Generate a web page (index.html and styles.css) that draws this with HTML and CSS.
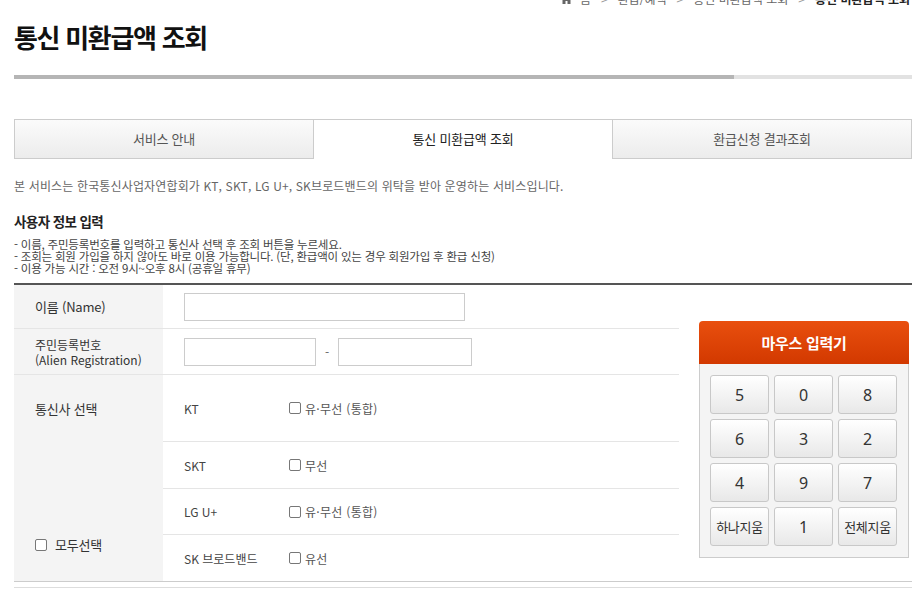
FILE: index.html
```html
<!DOCTYPE html>
<html lang="ko">
<head>
<meta charset="utf-8">
<title>통신 미환급액 조회</title>
<link rel="stylesheet" href="styles.css">
</head>
<body>
<div class="page">
  <div class="crumb">
    <svg class="home" width="11" height="10" viewBox="0 0 11 10"><path d="M5.5 0 L11 5 H9.5 V10 H6.5 V7 H4.5 V10 H1.5 V5 H0 Z" fill="#666"/></svg>
    <span>홈</span><span class="gt">&gt;</span><span>환급/혜택</span><span class="gt">&gt;</span><span>통신 미환급액 조회</span><span class="gt">&gt;</span><strong>통신 미환급액 조회</strong>
  </div>
  <h1 class="title">통신 미환급액 조회</h1>
  <div class="bar"><div class="bar-on"></div><div class="bar-off"></div></div>

  <div class="tabs">
    <div class="tab">서비스 안내</div>
    <div class="tab active">통신 미환급액 조회</div>
    <div class="tab">환급신청 결과조회</div>
  </div>

  <p class="desc">본 서비스는 한국통신사업자연합회가 KT, SKT, LG U+, SK브로드밴드의 위탁을 받아 운영하는 서비스입니다.</p>

  <h2 class="sub-title">사용자 정보 입력</h2>
  <ul class="notes">
    <li>- 이름, 주민등록번호를 입력하고 통신사 선택 후 조회 버튼을 누르세요.</li>
    <li>- 조회는 회원 가입을 하지 않아도 바로 이용 가능합니다. (단, 환급액이 있는 경우 회원가입 후 환급 신청)</li>
    <li>- 이용 가능 시간 : 오전 9시~오후 8시 (공휴일 휴무)</li>
  </ul>

  <div class="form-area">
    <div class="form-table">
      <div class="row row-name">
        <div class="th">이름 (Name)</div>
        <div class="td"><input type="text" class="inp inp-name"></div>
      </div>
      <div class="row row-reg">
        <div class="th th-two">주민등록번호<br>(Alien Registration)</div>
        <div class="td"><input type="text" class="inp inp-reg1"><span class="dash">-</span><input type="text" class="inp inp-reg2"></div>
      </div>
      <div class="row row-carrier">
        <div class="th th-carrier">
          <span>통신사 선택</span>
          <label class="all"><input type="checkbox" class="chk"><span>모두선택</span></label>
        </div>
        <div class="subrows">
          <div class="sub sub1"><span class="cname">KT</span><label class="opt"><input type="checkbox" class="chk"><span>유·무선 (통합)</span></label></div>
          <div class="sub sub2"><span class="cname">SKT</span><label class="opt"><input type="checkbox" class="chk"><span>무선</span></label></div>
          <div class="sub sub3"><span class="cname">LG U+</span><label class="opt"><input type="checkbox" class="chk"><span>유·무선 (통합)</span></label></div>
          <div class="sub sub4"><span class="cname">SK 브로드밴드</span><label class="opt"><input type="checkbox" class="chk"><span>유선</span></label></div>
        </div>
      </div>
    </div>

    <div class="keypad">
      <div class="kp-head">마우스 입력기</div>
      <div class="kp-body">
        <button class="key">5</button><button class="key">0</button><button class="key">8</button>
        <button class="key">6</button><button class="key">3</button><button class="key">2</button>
        <button class="key">4</button><button class="key">9</button><button class="key">7</button>
        <button class="key key-txt">하나지움</button><button class="key">1</button><button class="key key-txt">전체지움</button>
      </div>
    </div>
  </div>
  <div class="after"></div>
</div>
</body>
</html>
```

FILE: styles.css
```css
html, body {
  margin: 0;
  padding: 0;
  background: #fff;
  overflow: hidden;
}
body {
  font-family: "Noto Sans CJK KR", "Noto Sans", sans-serif;
  color: #333;
}
.page {
  width: 898px;
  margin-left: 14px;
}
.crumb {
  height: 12px;
  margin-top: -7px;
  font-size: 12px;
  line-height: 12px;
  color: #666;
  display: flex;
  justify-content: flex-end;
  align-items: center;
  gap: 10px;
  padding-right: 2px;
}
.crumb .home { margin-right: -2px; }
.crumb strong { color: #222; font-weight: bold; }
.crumb .gt { color: #999; }
.title {
  margin: 14px 0 0;
  font-size: 26px;
  line-height: 36px;
  font-weight: bold;
  color: #111;
  letter-spacing: -1.3px;
}
.bar {
  display: flex;
  height: 4px;
  margin-top: 20px;
}
.bar-on { width: 720px; background: #b5b5b5; }
.bar-off { flex: 1; background: #e2e2e2; }

.tabs {
  display: flex;
  margin-top: 40px;
  height: 40px;
}
.tab {
  flex: 1;
  box-sizing: border-box;
  border: 1px solid #ccc;
  border-right: none;
  background: linear-gradient(#fbfbfb, #ececec);
  font-size: 13px;
  line-height: 38px;
  text-align: center;
  color: #555;
  letter-spacing: -0.2px;
}
.tab:last-child { border-right: 1px solid #ccc; }
.tab.active {
  background: #fff;
  border-bottom: none;
  color: #222;
}
.desc {
  margin: 18px 0 0;
  font-size: 12px;
  line-height: 18px;
  color: #666;
  letter-spacing: 0.15px;
}
.sub-title {
  margin: 16px 0 0;
  font-size: 13.5px;
  line-height: 20px;
  font-weight: bold;
  color: #222;
  letter-spacing: -0.6px;
}
.notes {
  list-style: none;
  margin: 7px 0 0;
  padding: 0;
  font-size: 11.5px;
  line-height: 12px;
  color: #444;
  letter-spacing: -0.2px;
}

.form-area {
  margin-top: 9px;
  display: flex;
  justify-content: space-between;
  align-items: flex-start;
  border-top: 2px solid #555;
  border-bottom: 1px solid #ccc;
}
.form-table {
  width: 665px;
}
.row {
  display: flex;
  border-bottom: 1px solid #e5e5e5;
}
.row:last-child { border-bottom: none; }
.th {
  width: 149px;
  flex-shrink: 0;
  box-sizing: border-box;
  background: #f4f4f4;
  padding-left: 21px;
  font-size: 13px;
  color: #333;
  display: flex;
  align-items: center;
  letter-spacing: -0.2px;
}
.th-two {
  font-size: 12px;
  line-height: 15px;
  letter-spacing: 0;
}
.td {
  flex: 1;
  padding-left: 21px;
  display: flex;
  align-items: center;
}
.row-name { height: 43px; }
.row-reg { height: 45px; }
.inp {
  box-sizing: border-box;
  height: 28px;
  border: 1px solid #ccc;
  margin: 0;
  padding: 0 6px;
  font: inherit;
  background: #fff;
}
.inp-name { width: 281px; }
.inp-reg1 { width: 132px; }
.inp-reg2 { width: 134px; }
.dash {
  width: 22px;
  text-align: center;
  font-size: 12px;
  color: #666;
}
.th-carrier {
  flex-direction: column;
  align-items: flex-start;
  justify-content: space-between;
  padding-top: 24px;
  padding-bottom: 26px;
  line-height: 20px;
}
.all {
  display: flex;
  align-items: center;
  gap: 8px;
}
.chk {
  appearance: none;
  -webkit-appearance: none;
  width: 12px;
  height: 12px;
  margin: 0;
  border: 1px solid #777;
  border-radius: 2px;
  background: #fff;
  box-sizing: border-box;
}
.subrows { flex: 1; }
.sub {
  display: flex;
  align-items: center;
  padding-left: 21px;
  border-bottom: 1px solid #e5e5e5;
  font-size: 12px;
  color: #444;
}
.sub:last-child { border-bottom: none; }
.sub1 { height: 66px; }
.sub2 { height: 46px; }
.sub3 { height: 45px; }
.sub4 { height: 46px; }
.cname { width: 105px; }
.opt {
  display: flex;
  align-items: center;
  gap: 4px;
  color: #555;
  letter-spacing: 0.3px;
}

.keypad {
  width: 210px;
  margin-top: 36px;
  margin-right: 3px;
}
.kp-head {
  height: 43px;
  border-radius: 4px 4px 0 0;
  background: linear-gradient(#e94f0e, #d23900);
  color: #fff;
  font-size: 15px;
  font-weight: bold;
  line-height: 43px;
  text-align: center;
  letter-spacing: -0.3px;
}
.kp-body {
  box-sizing: border-box;
  border: 1px solid #ccc;
  border-top: none;
  background: #f4f4f4;
  padding: 11px 10px 11px 10px;
  display: grid;
  grid-template-columns: repeat(3, 59px);
  grid-auto-rows: 39px;
  gap: 5px;
}
.key {
  margin: 0;
  padding: 0;
  border: 1px solid #c8c8c8;
  border-radius: 3px;
  background: linear-gradient(#ffffff, #e8e8e8);
  font-family: "Noto Sans", "Noto Sans CJK KR", sans-serif;
  font-size: 16px;
  color: #333;
}
.key-txt {
  font-family: "Noto Sans CJK KR", sans-serif;
  font-size: 13px;
  letter-spacing: -0.3px;
}
.after {
  margin-top: 5px;
  height: 10px;
  border-top: 1px solid #ddd;
}
```
